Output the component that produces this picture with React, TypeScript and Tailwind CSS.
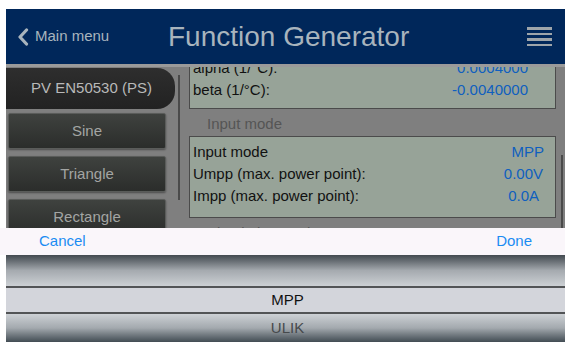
import React from "react";

const font = { fontFamily: '"Liberation Sans", Arial, sans-serif' };

function Btn({ label }: { label: string }) {
  return (
    <div className="h-[36px] mx-[2px] w-[158px] flex items-center justify-center rounded-[2px] border border-[#5a5c5a] bg-gradient-to-b from-[#3f423f] to-[#2b2d2b] text-[15px] text-[#a3a5a3] shadow-[0_1px_2px_rgba(0,0,0,0.4)]">
      {label}
    </div>
  );
}

function Row({ label, value, pr }: { label: string; value: string; pr: string }) {
  return (
    <div className="h-[22px] flex items-center justify-between text-[15px]">
      <span className="text-[#111]">{label}</span>
      <span className={`text-[#0f5fbf] ${pr}`}>{value}</span>
    </div>
  );
}

export default function App() {
  return (
    <div className="relative w-[565px] h-[342px] bg-white overflow-hidden pt-[9px] pl-[6px]" style={font}>
      {/* Header */}
      <div className="h-[55px] bg-[#00275a] flex items-center relative">
        <div className="flex items-center ml-[11px] text-[#a8b4bd]">
          <svg width="12" height="18" viewBox="0 0 12 18" className="mr-[6px]">
            <path d="M9.5 2 L3 9 L9.5 16" fill="none" stroke="#a8b4bd" strokeWidth="3.2" strokeLinecap="round" strokeLinejoin="round" />
          </svg>
          <span className="text-[15px]">Main menu</span>
        </div>
        <div className="absolute left-[162px] top-[13px] text-[28px] text-[#a8b4bd] leading-[30px]">Function Generator</div>
        <div className="ml-auto mr-[13px] flex flex-col gap-[3px]">
          <div className="w-[25px] h-[2.5px] bg-[#9ea5aa]" />
          <div className="w-[25px] h-[2.5px] bg-[#9ea5aa]" />
          <div className="w-[25px] h-[2.5px] bg-[#9ea5aa]" />
          <div className="w-[25px] h-[2.5px] bg-[#9ea5aa]" />
        </div>
      </div>
      <div className="h-[3px] bg-[#9a9a9a]" />
      {/* Content */}
      <div className="h-[275px] bg-[#7f7f7f] flex overflow-hidden">
        {/* Left column */}
        <div className="w-[172px] flex flex-col">
          <div className="h-[41px] mt-[1px] w-[169px] bg-gradient-to-b from-[#2e2e2e] to-[#222] rounded-r-[18px] flex items-center justify-center text-[15px] text-[#b9b9b9] pl-[2px]">
            PV EN50530 (PS)
          </div>
          <div className="flex flex-col gap-[7px] mt-[4px]">
            <Btn label="Sine" />
            <Btn label="Triangle" />
            <Btn label="Rectangle" />
          </div>
        </div>
        {/* Left scroll line */}
        <div className="w-[2px] bg-[#4a4a4a] mt-[8px] h-[125px]" />
        {/* Right column */}
        <div className="ml-[9px] w-[367px] flex flex-col">
          <div className="mt-[-11px] border border-[#4b4b4b] bg-[#97a398] pl-[3px] pb-[7px]">
            <Row label="alpha (1/°C):" value="0.0004000" pr="pr-[27px]" />
            <Row label="beta (1/°C):" value="-0.0040000" pr="pr-[27px]" />
          </div>
          <div className="h-[27px] flex items-center pl-[18px] pt-[4px] text-[15px] text-[#555]">Input mode</div>
          <div className="border border-[#4b4b4b] bg-[#97a398] pl-[3px] pt-[4px] pb-[10px]">
            <Row label="Input mode" value="MPP" pr="pr-[11px]" />
            <Row label="Umpp (max. power point):" value="0.00V" pr="pr-[12px]" />
            <Row label="Impp (max. power point):" value="0.0A" pr="pr-[16px]" />
          </div>
          <div className="h-[27px] flex items-center pl-[18px] pt-[4px] text-[15px] text-[#555]">Simulation mode</div>
        </div>
        {/* Right scrollbar */}
        <div className="ml-[5px] w-[2px] bg-[#4a4a4a] mt-[88px] h-[120px]" />
      </div>

      {/* Bottom picker overlay */}
      <div className="absolute left-0 right-0 bottom-0">
        <div className="h-[27px] bg-[#faf6fa] flex items-center justify-between text-[15px] text-[#1a8cf2]">
          <span className="ml-[39px]">Cancel</span>
          <span className="mr-[33px]">Done</span>
        </div>
        <div className="ml-[6px] flex flex-col">
          <div className="h-[31px] bg-gradient-to-b from-[#434a50] via-[#a5aaaf] to-[#ccd0d4]" />
          <div className="h-[2px] bg-[#525456]" />
          <div className="h-[24px] bg-[#d3d5db] flex items-center justify-center text-[15px] text-[#111] pl-[4px]">MPP</div>
          <div className="h-[2px] bg-[#525456]" />
          <div className="h-[28px] bg-gradient-to-b from-[#cdd1d5] via-[#a3a9ae] to-[#434d54] flex items-center justify-center text-[15px] text-[#46494c] pl-[4px]">ULIK</div>
        </div>
      </div>
    </div>
  );
}
